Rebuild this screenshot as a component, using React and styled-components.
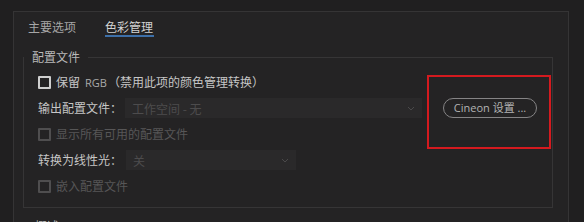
import React from "react";
import styled, { createGlobalStyle } from "styled-components";

const GlobalStyle = createGlobalStyle`
  html, body {
    margin: 0;
    padding: 0;
    background: #201f20;
  }
  body {
    font-family: "Noto Sans CJK SC", "Noto Sans", sans-serif;
    font-size: 12px;
    -webkit-font-smoothing: antialiased;
  }
`;

const Page = styled.div`
  width: 584px;
  height: 222px;
  overflow: hidden;
  padding: 11px 0 0 13px;
  box-sizing: border-box;
`;

const Panel = styled.div`
  width: 556px;
  height: 240px;
  box-sizing: border-box;
  background: #242324;
  border: 1px solid #353435;
  border-bottom: none;
`;

const Tabs = styled.div`
  display: flex;
  gap: 29px;
  padding: 7px 0 0 14px;
  height: 24px;
`;

const Tab = styled.div`
  position: relative;
  line-height: 16px;
  color: ${(p) => (p.$active ? "#d2d2d2" : "#a6a6a6")};
  &::after {
    content: "";
    display: ${(p) => (p.$active ? "block" : "none")};
    position: absolute;
    left: 0;
    right: -1px;
    top: 16px;
    height: 2px;
    background: #3d6fa8;
  }
`;

const Group = styled.fieldset`
  margin: 6px 15px 0 9px;
  padding: 0 15px 8px 14px;
  border: 1px solid #363536;
  display: flex;
  align-items: flex-start;
`;

const Legend = styled.legend`
  padding: 0 8px;
  line-height: 16px;
  color: #b9b9b9;
  margin-left: -14px;
`;

const Rows = styled.div`
  flex: 1;
  padding-top: 4px;
`;

const Row = styled.div`
  display: flex;
  align-items: center;
  height: 26px;
`;

const Box = styled.span`
  width: 13px;
  height: 13px;
  box-sizing: border-box;
  border: 2px solid ${(p) => (p.$off ? "#4f4e4f" : "#cfcfcf")};
  border-radius: 1px;
  margin-right: 5px;
`;

const Text = styled.span`
  line-height: 16px;
  white-space: nowrap;
  color: ${(p) => (p.$off ? "#575657" : "#c6c6c6")};
`;

const Latin = styled.span`
  font-family: "Open Sans", sans-serif;
  font-size: 11px;
  color: #a9a9a9;
  margin: 0 1px 0 5px;
`;

const Select = styled.div`
  display: flex;
  align-items: center;
  justify-content: space-between;
  box-sizing: border-box;
  width: ${(p) => p.$w}px;
  height: 20px;
  margin-left: ${(p) => p.$gap}px;
  padding: 0 7px 0 ${(p) => p.$pad}px;
  background: #2a292a;
  color: #4d4c4d;
  white-space: nowrap;
`;

const Chevron = () => (
  <svg width="8" height="5" viewBox="0 0 8 5">
    <path d="M1 1l3 3 3-3" fill="none" stroke="#4a494a" strokeWidth="1" />
  </svg>
);

const Side = styled.div`
  padding-top: 33px;
`;

const ButtonWrap = styled.div`
  position: relative;
`;

const Pill = styled.button`
  width: 94px;
  height: 20px;
  border: 1px solid #858485;
  border-radius: 10px;
  background: transparent;
  color: #b3b3b3;
  font-family: "Open Sans", "Noto Sans CJK SC", sans-serif;
  font-size: 11px;
  padding: 0;
  display: flex;
  align-items: center;
  justify-content: center;
  line-height: 16px;
`;

const Marker = styled.div`
  position: absolute;
  left: -16px;
  top: -23px;
  width: 124px;
  height: 74px;
  box-sizing: border-box;
  border: 2px solid #d41a1f;
  pointer-events: none;
`;

const NextTitle = styled.div`
  padding: 10px 0 0 21px;
  line-height: 16px;
  color: #b9b9b9;
`;

export default function App() {
  return (
    <>
      <GlobalStyle />
      <Page>
        <Panel>
          <Tabs>
            <Tab>主要选项</Tab>
            <Tab $active>色彩管理</Tab>
          </Tabs>
          <Group>
            <Legend>配置文件</Legend>
            <Rows>
              <Row>
                <Box />
                <Text>
                  保留<Latin>RGB</Latin>（禁用此项的颜色管理转换）
                </Text>
              </Row>
              <Row>
                <Text>输出配置文件：</Text>
                <Select $w={297} $gap={3} $pad={7}>
                  工作空间 - 无
                  <Chevron />
                </Select>
              </Row>
              <Row>
                <Box $off />
                <Text $off>显示所有可用的配置文件</Text>
              </Row>
              <Row>
                <Text>转换为线性光：</Text>
                <Select $w={170} $gap={4} $pad={7}>
                  关
                  <Chevron />
                </Select>
              </Row>
              <Row>
                <Box $off />
                <Text $off>嵌入配置文件</Text>
              </Row>
            </Rows>
            <Side>
              <ButtonWrap>
                <Pill>Cineon 设置 ...</Pill>
                <Marker />
              </ButtonWrap>
            </Side>
          </Group>
          <NextTitle>概述</NextTitle>
        </Panel>
      </Page>
    </>
  );
}
